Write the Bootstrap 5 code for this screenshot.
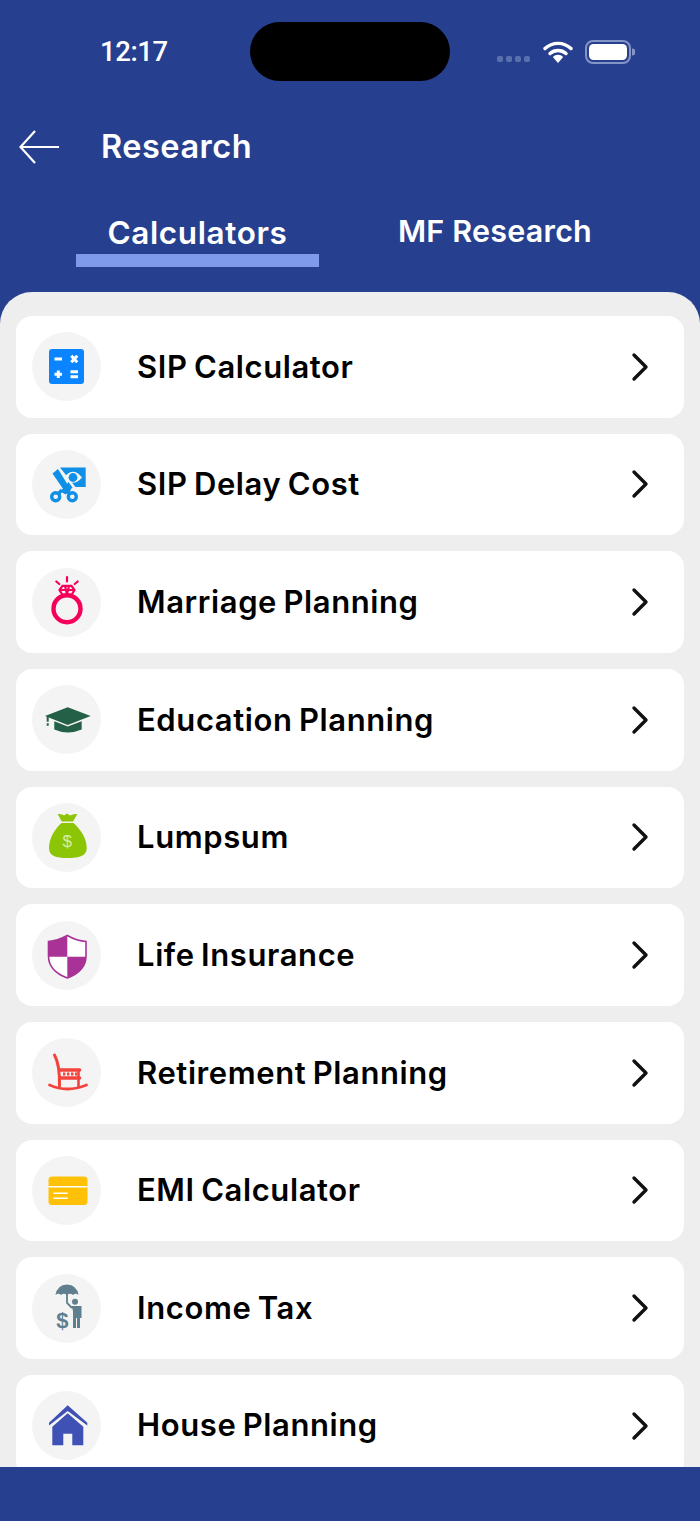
<!DOCTYPE html>
<html lang="en">
<head>
  <meta charset="UTF-8" />
  <meta name="viewport" content="width=device-width, initial-scale=1.0"/>
  <title>Research</title>
  <link href="https://cdn.jsdelivr.net/npm/bootstrap@5.3.0/dist/css/bootstrap.min.css" rel="stylesheet">
  <style>
    body {
      background-color: #26408f;
      font-family: "Inter", "Liberation Sans", sans-serif;
      height: 1521px;
      overflow: hidden;
    }
    .app-top { height: 292px; color: #fff; flex: none; }
    .status-row { height: 59px; margin-top: 22px; }
    .status-time { width: 250px; padding-left: 100px; font-family: "Roboto", sans-serif; font-size: 27.5px; font-weight: 500; letter-spacing: -0.4px; line-height: 60px; }
    .island { width: 200px; height: 59px; background: #000; border-radius: 30px; flex: none; }
    .status-icons { padding-left: 47px; padding-top: 18px; }
    .sig-wrap { gap: 3px; margin-top: 16px; margin-right: 13px; }
    .sig-dot { width: 6px; height: 6px; border-radius: 2px; background: #5a70ae; }
    .wifi-mark { margin-right: 12px; }
    .title-row { height: 34px; margin-top: 49px; }
    .back-link { width: 101px; padding-left: 19px; line-height: 0; }
    .page-title { font-size: 32.5px; font-weight: 600; line-height: 34px; margin: 0; letter-spacing: 0.5px; }
    .tab-row { margin-top: 49px; }
    .tab-btn { font-weight: 600; color: #fff; text-align: center; line-height: 36px; }
    .tab-one { font-size: 31.5px; letter-spacing: 0.6px; width: 243px; margin-left: 76px; padding-top: 2px; border-bottom: 13px solid #7f9aea; padding-bottom: 3px; }
    .tab-two { font-size: 30.5px; letter-spacing: 0.2px; width: 270px; margin-left: 41px; }
    .panel { background: #eeeeee; border-radius: 32px 32px 0 0; padding: 24px 16px 0; flex: 1 1 0; overflow: hidden; min-height: 0; }
    .calc-item { height: 101.67px; border: 0; border-radius: 16px; padding: 0 33px 0 16px; flex: none; }
    .icon-round { width: 69px; height: 69px; border-radius: 50%; background: #f4f4f4; flex: none; line-height: 0; }
    .calc-name { font-size: 31px; font-weight: 600; color: #000; margin-left: 36px; letter-spacing: 0.6px; word-spacing: -2px; }
    .app-bottom { height: 54px; flex: none; background: #26408f; }
  </style>
</head>
<body class="d-flex flex-column">

  <!-- Header -->
  <header class="app-top">
    <div class="status-row d-flex">
      <div class="status-time">12:17</div>
      <div class="island"></div>
      <div class="status-icons d-flex align-items-start">
        <div class="d-flex sig-wrap">
          <span class="sig-dot"></span><span class="sig-dot"></span><span class="sig-dot"></span><span class="sig-dot"></span>
        </div>
        <svg class="wifi-mark" width="30" height="24" viewBox="0 0 30 24">
          <path d="M2 8.5 A19 19 0 0 1 28 8.5" fill="none" stroke="#fff" stroke-width="3.4" stroke-linecap="round"/>
          <path d="M7 13.5 A12 12 0 0 1 23 13.5" fill="none" stroke="#fff" stroke-width="3.4" stroke-linecap="round"/>
          <path d="M9.8 17 L15 23 L20.2 17 A7 7 0 0 0 9.8 17 Z" fill="#fff"/>
        </svg>
        <svg width="50" height="24" viewBox="0 0 50 24">
          <rect x="1" y="1" width="44" height="22" rx="7" fill="none" stroke="#8494c4" stroke-width="2"/>
          <rect x="4" y="4" width="38" height="16" rx="4.5" fill="#fff"/>
          <path d="M47 8.5 a3.5 3.5 0 0 1 0 7 Z" fill="#8494c4"/>
        </svg>
      </div>
    </div>

    <div class="title-row d-flex align-items-center">
      <a class="back-link" href="#">
        <svg width="41" height="34" viewBox="0 0 41 34">
          <path d="M40 17 H2 M16 1 L1.5 17 L16 33" fill="none" stroke="#fff" stroke-width="2.2"/>
        </svg>
      </a>
      <h1 class="page-title">Research</h1>
    </div>

    <div class="tab-row d-flex align-items-start">
      <div class="tab-btn tab-one">Calculators</div>
      <div class="tab-btn tab-two">MF Research</div>
    </div>
  </header>

  <!-- List -->
  <main class="panel d-flex flex-column gap-3">

    <div class="card calc-item flex-row align-items-center">
      <div class="icon-round">
        <svg width="69" height="69" viewBox="0 0 69 69">
          <rect x="17" y="17" width="35" height="35" rx="3" fill="#0a84ff"/>
          <path d="M22.5 27 H30 M22.5 42.3 H30 M26.3 38.5 V46 M38.5 39.8 H46 M38.5 44.8 H46 M39.3 23.8 L45.2 30.2 M45.2 23.8 L39.3 30.2" stroke="#fff" stroke-width="3" fill="none"/>
        </svg>
      </div>
      <div class="calc-name flex-grow-1">SIP Calculator</div>
      <svg width="20" height="30" viewBox="0 0 20 30"><path d="M3 3 L15 15 L3 27" fill="none" stroke="#111" stroke-width="3.4" stroke-linecap="round" stroke-linejoin="round"/></svg>
    </div>

    <div class="card calc-item flex-row align-items-center">
      <div class="icon-round">
        <svg width="69" height="69" viewBox="0 0 69 69">
          <path d="M28 17.5 H53.7 V37 H43.5 Z" fill="#0f8fe6"/>
          <path d="M32 27.5 Q41 16 50 27.5 Q41 38 32 27.5 Z" fill="#f4f4f4"/>
          <circle cx="41" cy="27.5" r="4.4" fill="#0f8fe6"/>
          <path d="M20.5 23.5 L26 19 L39 40 L34.5 44 Z" fill="#0f8fe6"/>
          <path d="M28.5 41.5 L36.5 32 L40.5 37.5 L33.5 44.5 Z" fill="#0f8fe6"/>
          <circle cx="23.7" cy="46.7" r="4" fill="none" stroke="#0f8fe6" stroke-width="3.4"/>
          <circle cx="40.3" cy="46.7" r="4" fill="none" stroke="#0f8fe6" stroke-width="3.4"/>
          <path d="M26.5 43.5 L30 40 M37.5 43.5 L33 38" stroke="#0f8fe6" stroke-width="3.4"/>
        </svg>
      </div>
      <div class="calc-name flex-grow-1">SIP Delay Cost</div>
      <svg width="20" height="30" viewBox="0 0 20 30"><path d="M3 3 L15 15 L3 27" fill="none" stroke="#111" stroke-width="3.4" stroke-linecap="round" stroke-linejoin="round"/></svg>
    </div>

    <div class="card calc-item flex-row align-items-center">
      <div class="icon-round">
        <svg width="69" height="69" viewBox="0 0 69 69">
          <circle cx="35" cy="40.7" r="13.5" fill="none" stroke="#f5005a" stroke-width="4.4"/>
          <path d="M27.5 22 L30.5 17.8 H39.5 L42.5 22 L39.5 27 H30.5 Z M27.5 22 H42.5 M33 18 L35 26 L37 18" fill="none" stroke="#f5005a" stroke-width="2.2"/>
          <path d="M35 9 V13.5 M24.3 13.5 L27.3 16 M45.7 13.5 L42.7 16" stroke="#f5005a" stroke-width="2.2" stroke-linecap="round"/>
        </svg>
      </div>
      <div class="calc-name flex-grow-1">Marriage Planning</div>
      <svg width="20" height="30" viewBox="0 0 20 30"><path d="M3 3 L15 15 L3 27" fill="none" stroke="#111" stroke-width="3.4" stroke-linecap="round" stroke-linejoin="round"/></svg>
    </div>

    <div class="card calc-item flex-row align-items-center">
      <div class="icon-round">
        <svg width="69" height="69" viewBox="0 0 69 69">
          <path d="M13 31 L35.7 22.3 L58.7 31 L35.7 40 Z" fill="#245f48"/>
          <path d="M22.3 36.3 L35.7 41.5 L49.7 36.3 V44.5 Q35.7 50.5 22.3 44.5 Z" fill="#245f48"/>
          <path d="M15.7 31.5 V36.7 M15.7 38.3 V40.8" stroke="#245f48" stroke-width="2"/>
        </svg>
      </div>
      <div class="calc-name flex-grow-1">Education Planning</div>
      <svg width="20" height="30" viewBox="0 0 20 30"><path d="M3 3 L15 15 L3 27" fill="none" stroke="#111" stroke-width="3.4" stroke-linecap="round" stroke-linejoin="round"/></svg>
    </div>

    <div class="card calc-item flex-row align-items-center">
      <div class="icon-round">
        <svg width="69" height="69" viewBox="0 0 69 69">
          <path d="M25.7 11 Q30 10.5 32 12.5 L35 10.5 L38 12.5 Q41 10.5 45.3 11 L41 18.5 H29.7 Z" fill="#8cc406"/>
          <path d="M29.5 20 H41.5 C47 25 54.7 34 54.7 45 C54.7 53 47 55 35.5 55 C24 55 17 53 17 45 C17 34 24 25 29.5 20 Z" fill="#8cc406"/>
          <text x="35.3" y="43.5" text-anchor="middle" font-family="Liberation Sans, sans-serif" font-size="17" fill="#d8efa6">$</text>
        </svg>
      </div>
      <div class="calc-name flex-grow-1">Lumpsum</div>
      <svg width="20" height="30" viewBox="0 0 20 30"><path d="M3 3 L15 15 L3 27" fill="none" stroke="#111" stroke-width="3.4" stroke-linecap="round" stroke-linejoin="round"/></svg>
    </div>

    <div class="card calc-item flex-row align-items-center">
      <div class="icon-round">
        <svg width="69" height="69" viewBox="0 0 69 69">
          <path d="M35.3 14.5 Q25 20 16.5 20.5 V35 Q16.5 50 35.3 57 Q54 50 54 35 V20.5 Q45 20 35.3 14.5 Z" fill="#fff" stroke="#a83296" stroke-width="1.6"/>
          <path d="M35.3 15 Q25 20 16.5 20.5 V35.7 H35.3 Z" fill="#a83296"/>
          <path d="M35.3 35.7 H54 Q54 50 35.3 57 Z" fill="#a83296"/>
        </svg>
      </div>
      <div class="calc-name flex-grow-1">Life Insurance</div>
      <svg width="20" height="30" viewBox="0 0 20 30"><path d="M3 3 L15 15 L3 27" fill="none" stroke="#111" stroke-width="3.4" stroke-linecap="round" stroke-linejoin="round"/></svg>
    </div>

    <div class="card calc-item flex-row align-items-center">
      <div class="icon-round">
        <svg width="69" height="69" viewBox="0 0 69 69">
          <g fill="none" stroke="#f4433c" stroke-linecap="round">
            <path d="M22.5 17 Q28 27 27.5 48" stroke-width="3"/>
            <path d="M17.5 47 Q35 55 54.5 47" stroke-width="2.8"/>
            <path d="M28 32 H47.5" stroke-width="3.6"/>
            <path d="M28 40 H47.5" stroke-width="3.6"/>
            <path d="M46.5 32 V49" stroke-width="2.6"/>
            <path d="M31 36 H45" stroke-width="3" stroke-dasharray="2.4 1.6" stroke-linecap="butt"/>
          </g>
        </svg>
      </div>
      <div class="calc-name flex-grow-1">Retirement Planning</div>
      <svg width="20" height="30" viewBox="0 0 20 30"><path d="M3 3 L15 15 L3 27" fill="none" stroke="#111" stroke-width="3.4" stroke-linecap="round" stroke-linejoin="round"/></svg>
    </div>

    <div class="card calc-item flex-row align-items-center">
      <div class="icon-round">
        <svg width="69" height="69" viewBox="0 0 69 69">
          <rect x="16.5" y="20.5" width="39" height="28.5" rx="3.5" fill="#ffc107"/>
          <path d="M16.5 30.7 H55.5" stroke="#fff" stroke-width="1.4"/>
          <path d="M21.3 37.3 H35.7 M21.3 42.3 H35.7" stroke="#fff" stroke-width="1.6"/>
        </svg>
      </div>
      <div class="calc-name flex-grow-1">EMI Calculator</div>
      <svg width="20" height="30" viewBox="0 0 20 30"><path d="M3 3 L15 15 L3 27" fill="none" stroke="#111" stroke-width="3.4" stroke-linecap="round" stroke-linejoin="round"/></svg>
    </div>

    <div class="card calc-item flex-row align-items-center">
      <div class="icon-round">
        <svg width="69" height="69" viewBox="0 0 69 69">
          <path d="M23.5 21 Q25 11 35 10.5 Q45 11 46.5 21 Q43.5 18.5 41 21 Q38 18.5 35 21 Q32 18.5 29 21 Q26.5 18.5 23.5 21 Z" fill="#5f7f8e"/>
          <path d="M35 20 V29 L40 34" fill="none" stroke="#5f7f8e" stroke-width="1.8"/>
          <circle cx="43" cy="27.7" r="3" fill="#5f7f8e"/>
          <path d="M39.5 32 H49.5 V44 H48 V54 H45 V44 H44 V54 H41 V37 Z" fill="#5f7f8e"/>
          <text x="30.3" y="54" text-anchor="middle" font-family="Liberation Sans, sans-serif" font-weight="700" font-size="22" fill="#5f7f8e">$</text>
        </svg>
      </div>
      <div class="calc-name flex-grow-1">Income Tax</div>
      <svg width="20" height="30" viewBox="0 0 20 30"><path d="M3 3 L15 15 L3 27" fill="none" stroke="#111" stroke-width="3.4" stroke-linecap="round" stroke-linejoin="round"/></svg>
    </div>

    <div class="card calc-item flex-row align-items-center">
      <div class="icon-round">
        <svg width="69" height="69" viewBox="0 0 69 69">
          <path d="M17 31.7 L35.7 14.3 L55.3 31.7 V34.6 L35.7 20 L17 34.6 Z" fill="#3f51b5"/>
          <path d="M35.7 22.3 L51.3 35.7 V54.3 H40.3 V42.7 H31.3 V54.3 H20.3 V35.7 Z" fill="#3f51b5"/>
        </svg>
      </div>
      <div class="calc-name flex-grow-1">House Planning</div>
      <svg width="20" height="30" viewBox="0 0 20 30"><path d="M3 3 L15 15 L3 27" fill="none" stroke="#111" stroke-width="3.4" stroke-linecap="round" stroke-linejoin="round"/></svg>
    </div>

  </main>

  <footer class="app-bottom"></footer>

  <script src="https://cdn.jsdelivr.net/npm/bootstrap@5.3.0/dist/js/bootstrap.bundle.min.js"></script>
</body>
</html>
